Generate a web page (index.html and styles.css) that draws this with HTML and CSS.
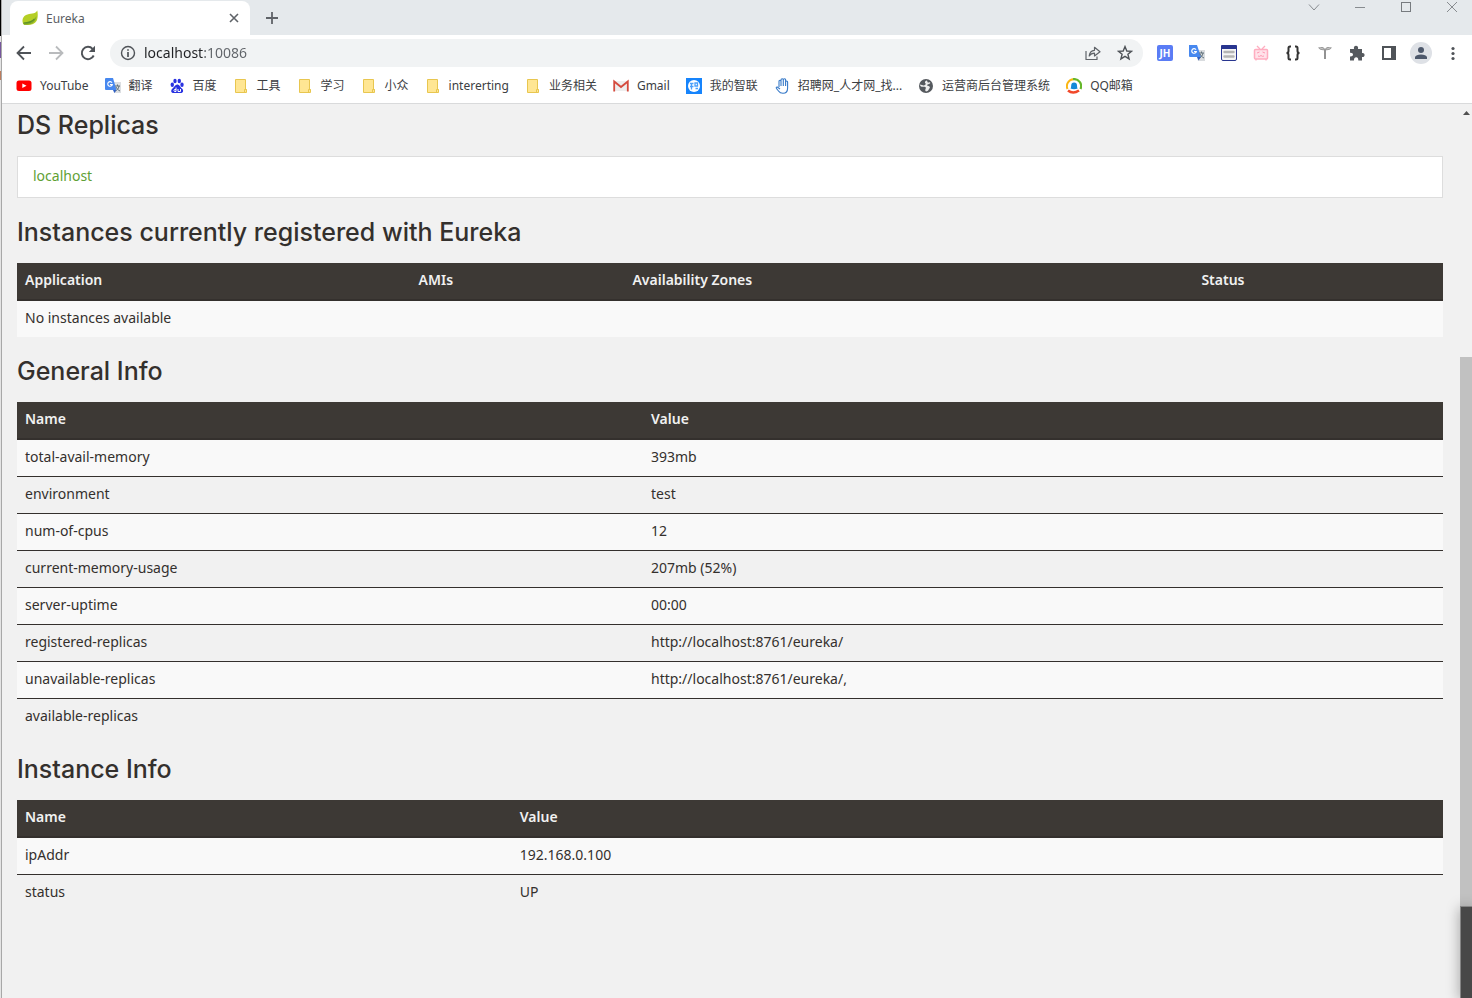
FILE: index.html
```html
<!DOCTYPE html>
<html lang="zh-CN">
<head>
<meta charset="utf-8">
<title>Eureka</title>
<link rel="stylesheet" href="styles.css">
</head>
<body>
<div class="edge"></div>
<div class="window">
  <header class="tabstrip">
    <div class="tab">
      <svg class="icon" viewBox="0 0 16 16"><path d="M15.300 0.500C16 4 16 8 14.500 11C12.500 14.500 8 15.500 2 14.700C-.5 12 0 7 4 5C8 3.200 13 4.500 15.300.5Z" fill="#b5cf25"/><path d="M1.500 13C7 12.500 12 10.500 14.500 6C14 11 11 15.500 2 14.700Z" fill="#87ae2b"/><path d="M1.500 13.200C6 13 10 11.700 12.500 9" fill="none" stroke="#609327" stroke-width="1.300"/></svg>
      <span class="tab-title">Eureka</span>
      <button class="plain" aria-label="Close tab"><svg width="10" height="10" viewBox="0 0 10 10"><path d="M1 1L9 9M9 1L1 9" stroke="#5f6368" stroke-width="1.600"/></svg></button>
    </div>
    <button class="plain new-tab" aria-label="New tab"><svg width="12" height="12" viewBox="0 0 12 12"><path d="M6 0V12M0 6H12" stroke="#5f6368" stroke-width="1.800"/></svg></button>
    <div class="window-controls">
      <button class="plain" aria-label="Search tabs"><svg width="12" height="12" viewBox="0 0 12 12"><path d="M1 3.500L6 9L11 3.500" fill="none" stroke="#888c90"/></svg></button>
      <button class="plain" aria-label="Minimize"><svg width="12" height="12" viewBox="0 0 12 12"><path d="M1 6.500H11" stroke="#888c90"/></svg></button>
      <button class="plain" aria-label="Maximize"><svg width="12" height="12" viewBox="0 0 12 12"><rect x="1.500" y="1.500" width="9" height="9" fill="none" stroke="#777b7f"/></svg></button>
      <button class="plain" aria-label="Close"><svg width="12" height="12" viewBox="0 0 12 12"><path d="M1 1L11 11M11 1L1 11" stroke="#888c90"/></svg></button>
    </div>
  </header>

  <div class="toolbar">
    <div class="nav">
      <button class="plain" aria-label="Back"><svg class="icon" viewBox="0 0 16 16"><path d="M15 8H2M8 1.500L1.500 8L8 14.500" fill="none" stroke="#4f5358" stroke-width="1.800"/></svg></button>
      <button class="plain" aria-label="Forward"><svg class="icon" viewBox="0 0 16 16"><path d="M1 8H14M8 1.500L14.500 8L8 14.500" fill="none" stroke="#b9bbbd" stroke-width="1.800"/></svg></button>
      <button class="plain" aria-label="Reload"><svg class="icon" viewBox="0 0 16 16"><path d="M13.700 10.500A6.200 6.200 0 1 1 12.600 3.800" fill="none" stroke="#4f5358" stroke-width="1.900"/><path d="M15 .8V7H8.800Z" fill="#4f5358"/></svg></button>
    </div>
    <div class="omnibox">
      <svg class="icon" viewBox="0 0 16 16"><circle cx="8" cy="8" r="6.500" fill="none" stroke="#4f5358" stroke-width="1.400"/><path d="M8 7V12M8 4.200V5.800" stroke="#4f5358" stroke-width="1.700"/></svg>
      <input class="address" type="text" value="localhost:10086" aria-label="Address">
      <button class="plain" aria-label="Share"><svg class="icon" viewBox="0 0 16 16"><path d="M1 6V14.500H12V11.500M4.200 11C4.500 7.500 6.500 5.500 9.500 5.300V2.300L15 6.800L9.500 11V8.200C7 8.200 5.500 9 4.200 11Z" fill="none" stroke="#5f6368" stroke-width="1.200" stroke-linejoin="round"/></svg></button>
      <button class="plain" aria-label="Bookmark"><svg class="icon" viewBox="0 0 16 16"><path d="M8 1.600L9.800 6L14.500 6.300L10.900 9.300L12.100 13.900L8 11.400L3.900 13.900L5.100 9.300L1.500 6.300L6.200 6Z" fill="none" stroke="#4f5358" stroke-width="1.400"/></svg></button>
    </div>
    <div class="extensions">
      <button class="plain badge" aria-label="JH">JH</button>
      <button class="plain" aria-label="Translate"><svg class="icon" viewBox="0 0 16 16"><path d="M6 5H16V16H9Z" fill="#d9dcdf"/><path d="M0 0H8L12 12H1Q0 12 0 11Z" fill="#4788ef"/><path d="M8 12H12L9.500 15.500Z" fill="#2d5fc8"/><path d="M7 4.700A2.300 2.300 0 1 0 7.300 6.500H5" fill="none" stroke="#fff" stroke-width="1.200"/><path d="M10 8H15M12.500 6.500V8M14 8C13.500 11 12 12 10.500 13M11 9C12 11 13 12 15 13" fill="none" stroke="#60717b"/></svg></button>
      <button class="plain" aria-label="Reader"><svg class="icon" viewBox="0 0 16 16"><rect x=".5" y=".5" width="15" height="15" rx="1.500" fill="#f5f5f5" stroke="#28358f"/><path d="M0 1Q0 0 1 0H15Q16 0 16 1V4H0Z" fill="#28358f"/><path d="M3.500 7H12.500M3.500 11.500H12.500" stroke="#b5b5b5" stroke-width="2.400" stroke-linecap="round"/></svg></button>
      <button class="plain" aria-label="TV"><svg class="icon" viewBox="0 0 16 16"><path d="M4 1L7 4M12 1L9 4M3 14V15.500M13 14V15.500" stroke="#ffadc0" stroke-width="1.300"/><rect x="1.500" y="4.500" width="13" height="9.500" rx="1" fill="#ffe2e9" stroke="#ffadc0" stroke-width="1.500"/><path d="M4 8L6.500 7M12 8L9.500 7M5 11Q6.500 12 8 10.500Q9.500 12 11 11" fill="none" stroke="#ff98b2"/></svg></button>
      <button class="plain" aria-label="JSON"><svg class="icon" viewBox="0 0 16 16"><path d="M6 1.500H5Q3.500 1.500 3.500 3V6Q3.500 8 1.500 8Q3.500 8 3.500 10V13Q3.500 14.500 5 14.500H6M10 1.500H11Q12.500 1.500 12.500 3V6Q12.500 8 14.500 8Q12.500 8 12.500 10V13Q12.500 14.500 11 14.500H10" fill="none" stroke="#333" stroke-width="2"/></svg></button>
      <button class="plain" aria-label="Sprout"><svg class="icon" viewBox="0 0 16 16"><path d="M8 4V14" stroke="#777" stroke-width="1.600"/><path d="M8 5C6 5.500 3 5.500 1 2.500C4 1.500 7 1.500 8 4C9 1.500 12 1.500 15 2.500C13 5.500 10 5.500 8 5Z" fill="#999"/><path d="M3 3L6.500 4M13 3L9.500 4" fill="none" stroke="#ddd" stroke-width=".7"/></svg></button>
      <button class="plain" aria-label="Extensions"><svg class="icon" viewBox="0 0 16 16"><path d="M1 4H5C4.500 1.800 5.600.7 7 .7S9.500 1.800 9 4H13V8C14.500 7.700 15.600 8.600 15.600 10S14.500 12.300 13 12V15.500H9.300C9.500 13.500 8.500 12.300 7.200 12.300S4.800 13.500 5 15.500H1V11.500C3 11.700 4 10.900 4 9.600S3 7.500 1 7.700Z" fill="#55595e"/></svg></button>
      <button class="plain" aria-label="Side panel"><svg class="icon" viewBox="0 0 16 16"><rect x="2" y="2" width="12" height="12" fill="none" stroke="#4f5358" stroke-width="2"/><path d="M10 1H15V15H10Z" fill="#4f5358"/></svg></button>
      <button class="plain avatar" aria-label="Profile"><svg width="14" height="14" viewBox="0 0 14 14"><circle cx="7" cy="4" r="3" fill="#4d586b"/><path d="M1 13V11Q2 8.500 7 8.500T13 11V13Z" fill="#4d586b"/></svg></button>
      <button class="plain" aria-label="Menu"><svg class="icon" viewBox="0 0 16 16"><g fill="#4f5358"><circle cx="8" cy="3.500" r="1.600"/><circle cx="8" cy="8.500" r="1.600"/><circle cx="8" cy="13.500" r="1.600"/></g></svg></button>
    </div>
  </div>

  <nav class="bookmarks">
    <a href="#"><svg class="icon" viewBox="0 0 16 16"><rect x="0.500" y="2.500" width="15" height="10.500" rx="2.500" fill="#f00"/><path d="M6.300 5.500L10.500 7.800L6.300 10.100Z" fill="#fff"/></svg>YouTube</a>
    <a href="#"><svg class="icon" viewBox="0 0 16 16"><path d="M6 4H16V15H9Z" fill="#dcdfe2"/><path d="M1 0H8L11.500 12H1Q0 12 0 11V1Q0 0 1 0Z" fill="#4788ef"/><path d="M8 12H11.500L9.500 15Z" fill="#2d5fc8"/><path d="M7 4.700A2.300 2.300 0 1 0 7.300 6.500H5" fill="none" stroke="#fff" stroke-width="1.100"/><path d="M10 8H15M12.500 6.500V8M14 8C13.500 11 12 12 10.500 13M11 9C12 11 13 12 15 13" fill="none" stroke="#60717b"/></svg>翻译</a>
    <a href="#"><svg class="icon" viewBox="0 0 16 16"><g fill="#2932e1"><ellipse cx="3.300" cy="6.800" rx="1.700" ry="2.200"/><ellipse cx="6" cy="3" rx="1.700" ry="2.200"/><ellipse cx="10.300" cy="3" rx="1.700" ry="2.200"/><ellipse cx="13" cy="6.800" rx="1.700" ry="2.200"/><path d="M8.200 6.500C10.500 6.500 11 9 13 10.500C15.500 13 13.500 15.500 11 15H5.500C2.500 15.500 1 13 3.500 10.500C5.500 9 6 6.500 8.200 6.500Z"/></g><path d="M7 9.500V13.500H5.500Q4.500 12.500 5.500 11.500H7M9 11V13.500H11.500V11" fill="none" stroke="#fff"/></svg>百度</a>
    <a href="#"><svg class="icon"><use href="#folder"/></svg>工具</a>
    <a href="#"><svg class="icon"><use href="#folder"/></svg>学习</a>
    <a href="#"><svg class="icon"><use href="#folder"/></svg>小众</a>
    <a href="#"><svg class="icon"><use href="#folder"/></svg>intererting</a>
    <a href="#"><svg class="icon"><use href="#folder"/></svg>业务相关</a>
    <a href="#"><svg class="icon" viewBox="0 0 16 16"><path d="M1 3H15V13H1Z" fill="#eee"/><path d="M1.200 13.500V3.500L8 9L14.800 3.500V13.500" fill="none" stroke="#d54b3e" stroke-width="1.800"/></svg>Gmail</a>
    <a href="#"><svg class="icon" viewBox="0 0 16 16"><path d="M0 0H16V16H0Z" fill="#1684fc"/><circle cx="8" cy="8" r="6" fill="#fff"/><path d="M4 5.500H7.500M4 8.500H7.500M5.500 5.500V11.500M9 5H11.500V8H9ZM9.500 10.500H12" fill="none" stroke="#4a9ffb" stroke-width="1.300"/></svg>我的智联</a>
    <a href="#"><svg class="icon" viewBox="0 0 16 16"><path d="M4 9V3.500Q4 2.300 5 2.300T6 3.500V8V2Q6 .7 7.200.7T8.300 2V8V1.800Q8.300.7 9.500.7T10.600 2V8V4Q10.600 3 11.600 3T12.600 4V10Q12.600 15.300 8 15.300Q5 15.300 3.500 13L1.500 10.500Q.8 8.800 2.300 9L5 11" transform="translate(1 0)" fill="none" stroke="#3679c8" stroke-width="1.100"/></svg>招聘网_人才网_找...</a>
    <a href="#"><svg class="icon" viewBox="0 0 16 16"><circle cx="8" cy="8" r="7" fill="#55595e"/><path d="M9 2.500Q6.500 3 7 5Q8.500 5.500 7.500 6.500Q6 8 4 7L2 6.500Q2 8.500 3.500 8.700H6.500Q8.500 9 7.500 11Q6.500 12 8 13.500Q10.500 13 11 11Q13 9 10.500 8L9 7.500Q9 6 11 6Q13 5.500 12 4Q10 5 9.500 4Z" fill="#eee"/></svg>运营商后台管理系统</a>
    <a href="#"><svg class="icon" viewBox="0 0 16 16"><path d="M1.500 11A7 7 0 0 1 7.500 1.200" fill="none" stroke="#fbb614" stroke-width="2"/><path d="M7 1.200A7 7 0 0 1 14.500 11" fill="none" stroke="#65b72a" stroke-width="2.200"/><path d="M2 12.500Q7 16.500 13 12.500" fill="none" stroke="#f1482a" stroke-width="2.600"/><path d="M4.500 10.500C5.300 9.500 5 8.500 5.200 7.500A2.900 2.900 0 0 1 11 7.500C11.200 8.500 10.900 9.500 11.700 10.500Q8 12 4.500 10.500Z" fill="#1289d8"/></svg>QQ邮箱</a>
    <svg class="defs"><symbol id="folder" viewBox="0 0 16 16"><path d="M2.500 1.500H12.500V11.500H13.500V14.500H2.500Z" fill="#ffe693" stroke="#e8c64f"/><path d="M11.500 14V11.500H13.500" fill="none" stroke="#e8c64f"/></symbol></svg>
  </nav>

  <div class="viewport">
    <main class="page">
      <h1>DS Replicas</h1>
      <ul class="replicas"><li><a href="#">localhost</a></li></ul>

      <h1>Instances currently registered with Eureka</h1>
      <table class="instances">
        <thead><tr><th class="col-app">Application</th><th class="col-amis">AMIs</th><th class="col-zones">Availability Zones</th><th>Status</th></tr></thead>
        <tbody><tr><td colspan="4">No instances available</td></tr></tbody>
      </table>

      <h1>General Info</h1>
      <table class="general">
        <thead><tr><th>Name</th><th>Value</th></tr></thead>
        <tbody>
          <tr><td>total-avail-memory</td><td>393mb</td></tr>
          <tr><td>environment</td><td>test</td></tr>
          <tr><td>num-of-cpus</td><td>12</td></tr>
          <tr><td>current-memory-usage</td><td>207mb (52%)</td></tr>
          <tr><td>server-uptime</td><td>00:00</td></tr>
          <tr><td>registered-replicas</td><td>http://localhost:8761/eureka/</td></tr>
          <tr><td>unavailable-replicas</td><td>http://localhost:8761/eureka/,</td></tr>
          <tr><td>available-replicas</td><td></td></tr>
        </tbody>
      </table>

      <h1>Instance Info</h1>
      <table class="instance">
        <thead><tr><th>Name</th><th>Value</th></tr></thead>
        <tbody>
          <tr><td>ipAddr</td><td>192.168.0.100</td></tr>
          <tr><td>status</td><td>UP</td></tr>
        </tbody>
      </table>
    </main>
    <div class="scrollbar"><svg width="12" height="16" viewBox="0 0 12 16"><path d="M3 11L6.500 7L10 11Z" fill="#505050"/></svg><div class="thumb"></div></div>
  </div>
</div>
<div class="corner-panel"></div>
</body>
</html>
```
FILE: styles.css
```css
* { box-sizing: border-box; }

body {
  margin: 0;
  display: flex;
  height: 100vh;
  overflow: hidden;
  position: relative;
  background: #f1f1f1;
  font-family: "Noto Sans", "Noto Sans CJK SC", sans-serif;
}

.edge {
  flex: none;
  width: 2px;
  border-right: 1px solid #a8a8a8;
  background: linear-gradient(#000 36px, #e4e4e4 36px, #e4e4e4 42px, #76569c 42px, #76569c 58px, #e4e4e4 58px, #e4e4e4 71px, #bd7c5c 71px, #bd7c5c 80px, #e4e4e4 80px);
}

.window { flex: 1; min-width: 0; display: flex; flex-direction: column; }

.plain {
  display: flex;
  align-items: center;
  justify-content: center;
  padding: 0;
  border: 0;
  background: none;
}

.icon { flex: none; width: 16px; height: 16px; }
.defs { display: none; }

.tabstrip {
  display: flex;
  height: 35px;
  padding-left: 8px;
  background: #e5e9ec;
}

.tab {
  display: flex;
  align-items: center;
  width: 240px;
  margin-top: 1px;
  padding: 0 11px 0 12px;
  border-radius: 8px 8px 0 0;
  background: #fff;
}

.tab-title {
  flex: 1;
  padding-left: 8px;
  color: #5a5e63;
  font-size: 12px;
}

.new-tab { width: 44px; }

.window-controls {
  display: flex;
  gap: 34px;
  height: 14px;
  margin-left: auto;
  padding-right: 14px;
}

.toolbar {
  display: flex;
  align-items: center;
  height: 36px;
  padding: 0 11px 0 14px;
  background: #fff;
}

.nav { display: flex; gap: 16px; margin-right: 14px; }

.omnibox {
  flex: 1;
  min-width: 0;
  display: flex;
  align-items: center;
  gap: 16px;
  height: 28px;
  padding: 0 10px;
  border-radius: 14px;
  background: #f1f3f4;
}

.address {
  flex: 1;
  min-width: 0;
  margin-left: -8px;
  padding: 0 0 2px;
  border: 0;
  outline: 0;
  background: linear-gradient(90deg, #202124 60px, #5f6368 60px);
  background-clip: text;
  color: transparent;
  font-family: "Noto Sans", sans-serif;
  font-size: 14px;
}

.extensions { display: flex; align-items: center; gap: 16px; margin-left: 14px; }

.badge {
  width: 16px;
  height: 16px;
  border-radius: 2px;
  background: #5a7cf5;
  color: #fff;
  font: bold 10px "Noto Sans", sans-serif;
}

.avatar { width: 22px; height: 22px; margin: 0 -3px; border-radius: 11px; background: #dee1e6; }

.bookmarks {
  display: flex;
  align-items: center;
  gap: 16px;
  height: 33px;
  padding: 0 14px 3px;
  border-bottom: 1px solid #d9dadb;
  background: #fff;
}

.bookmarks a {
  display: flex;
  align-items: center;
  gap: 8px;
  color: #3c4043;
  font-size: 12px;
  line-height: 16px;
  text-decoration: none;
  white-space: nowrap;
}

.viewport { flex: 1; min-height: 0; display: flex; }

.page {
  flex: 1;
  min-width: 0;
  padding: 6px 17px 0 15px;
  color: #34302d;
  font-size: 14px;
  line-height: 20px;
}

h1 {
  margin: 19px 0 16px;
  font-family: Inter, "Noto Sans", sans-serif;
  font-size: 25px;
  font-weight: 500;
  line-height: 30px;
}

h1:first-child { margin-top: 0; }

.replicas {
  margin: 0;
  padding: 9px 15px 11px;
  border: 1px solid #ddd;
  background: #fff;
  list-style: none;
}

.replicas a { color: #5fa134; text-decoration: none; }

table { width: 100%; table-layout: fixed; border-collapse: separate; border-spacing: 0; }

th, td { padding: 7px 8px 9px; text-align: left; }

th {
  height: 38px;
  border-bottom: 2px solid #34302d;
  background: #3d3935;
  color: #f1f1f1;
  font-weight: 600;
}

td { height: 36px; }

tbody tr + tr td { height: 37px; border-top: 1px solid #34302d; }

tbody tr:nth-child(odd) { background: #f9f9f9; }

.col-app { width: 27.6%; }
.col-amis { width: 15%; }
.col-zones { width: 39.9%; }
.general th:first-child { width: 43.9%; }
.instance th:first-child { width: 34.7%; }

.scrollbar { flex: none; display: flex; flex-direction: column; width: 12px; }
.scrollbar svg { flex: none; }
.thumb { flex: 1; margin-top: 237px; background: #c1c1c1; }

.corner-panel {
  position: absolute;
  right: 0;
  bottom: 0;
  width: 12px;
  height: 92px;
  border-top: 1px solid #858585;
  border-left: 1px solid #858585;
  background: #484848;
  box-shadow: 0 2px 14px rgba(0, 0, 0, 0.35);
}
```
